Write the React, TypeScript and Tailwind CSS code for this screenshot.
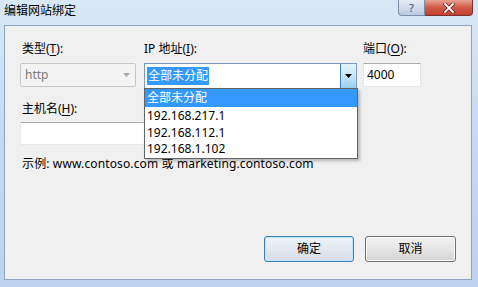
import React from "react";

const font = { fontFamily: '"Noto Sans", "Noto Sans CJK SC", sans-serif' };

function U({ c }: { c: string }) {
  return <span className="underline underline-offset-2">{c}</span>;
}

export default function App() {
  return (
    <div
      className="w-[478px] h-[287px] flex flex-col overflow-hidden bg-gradient-to-b from-[#d9e8f7] via-[#c4d9ef] to-[#bcd3ec] text-[12px] text-black"
      style={font}
    >
      {/* title bar */}
      <div className="h-[25px] flex items-start shrink-0">
        <div className="pl-[4px] pt-[3px] leading-[16px] text-[12px] text-black">编辑网站绑定</div>
        <div className="ml-auto mr-[5px] flex">
          <div className="w-[27px] h-[16px] rounded-bl-[4px] border border-[#7a8ea8] border-t-0 bg-gradient-to-b from-[#e4edf7] to-[#b9cbe0] flex items-center justify-center text-[11px] leading-none text-[#3b4d63]">
            ?
          </div>
          <div className="w-[48px] h-[16px] rounded-br-[4px] border border-[#7a3230] border-t-0 border-l-0 bg-gradient-to-b from-[#e8a194] via-[#cf5a48] to-[#c2402f] flex items-center justify-center">
            <svg width="12" height="10" viewBox="0 0 12 10">
              <path d="M2 1 L10 9 M10 1 L2 9" stroke="#5a1f18" strokeWidth="3.2" strokeLinecap="square" />
              <path d="M2 1 L10 9 M10 1 L2 9" stroke="#ffffff" strokeWidth="1.8" strokeLinecap="square" />
            </svg>
          </div>
        </div>
      </div>

      {/* client area */}
      <div className="ml-[4px] mr-[6px] h-[255px] border border-[#8ea6c2] bg-[#f0f0f0] relative flex flex-col pl-[15px] pt-[15px]">
        {/* row 1 */}
        <div className="flex">
          <div className="w-[116px] flex flex-col">
            <div className="pl-[2px] leading-[16px]">
              类型(<U c="T" />):
            </div>
            <div className="mt-[6px] h-[24px] border border-[#c5c9cc] bg-[#f4f4f4] rounded-[2px] flex items-center pl-[4px] text-[#7b7b7b]">
              <span className="flex-1">http</span>
              <svg width="7" height="4" viewBox="0 0 7 4" className="mr-[5px]">
                <path d="M0 0 L7 0 L3.5 4 Z" fill="#a8a8a8" />
              </svg>
            </div>
          </div>
          <div className="w-[213px] ml-[8px] flex flex-col">
            <div className="leading-[16px]">
              IP 地址(<U c="I" />):
            </div>
            <div className="mt-[6px] h-[26px] border border-[#7d9ab8] bg-white flex items-center pl-[2px]">
              <span className="flex-1 flex">
                <span className="bg-[#3399ff] text-white px-[1px] leading-[18px]">全部未分配</span>
              </span>
              <div className="w-[16px] h-full border-l border-[#3c7fb1] bg-gradient-to-b from-[#e5f4fc] via-[#c4e5f6] to-[#98d1ef] flex items-center justify-center">
                <svg width="7" height="4" viewBox="0 0 7 4">
                  <path d="M0 0 L7 0 L3.5 4 Z" fill="#000" />
                </svg>
              </div>
            </div>
          </div>
          <div className="w-[58px] ml-[6px] flex flex-col">
            <div className="leading-[16px]">
              端口(<U c="O" />):
            </div>
            <div className="mt-[6px] h-[24px] border border-[#e3e9ef] border-t-[#abadb3] bg-white flex items-center pl-[3px]">
              4000
            </div>
          </div>
        </div>

        {/* row 2 */}
        <div className="mt-[12px] w-[337px] flex flex-col">
          <div className="pl-[2px] leading-[16px]">
            主机名(<U c="H" />):
          </div>
          <div className="mt-[5px] h-[23px] border border-[#e3e9ef] border-t-[#abadb3] bg-white"></div>
        </div>

        <div className="mt-[11px] pl-[2px] leading-[16px] tracking-[0.13px]">示例: www.contoso.com 或 marketing.contoso.com</div>

        {/* buttons */}
        <div className="mt-auto mb-[17px] flex justify-end pr-[15px] gap-[11px]">
          <button className="w-[90px] h-[26px] rounded-[3px] border border-[#3c7fb1] bg-gradient-to-b from-[#edf5fb] via-[#e2e9f0] to-[#d8dde8] shadow-[inset_0_0_0_1px_#bde6fd] text-[12px]">
            确定
          </button>
          <button className="w-[91px] h-[26px] rounded-[3px] border border-[#707070] bg-gradient-to-b from-[#f2f2f2] via-[#e6e6e6] to-[#d2d2d2] shadow-[inset_0_0_0_1px_#fcfcfc] text-[12px]">
            取消
          </button>
        </div>

        {/* dropdown list overlay */}
        <div className="absolute left-[139px] top-[62px] w-[214px] border border-[#646464] bg-white shadow-[2px_2px_3px_rgba(0,0,0,0.25)] flex flex-col">
          <div className="h-[18px] leading-[18px] pl-[2px] bg-[#3399ff] text-white">全部未分配</div>
          <div className="h-[17px] leading-[17px] pl-[2px]">192.168.217.1</div>
          <div className="h-[17px] leading-[17px] pl-[2px]">192.168.112.1</div>
          <div className="h-[17px] leading-[16px] pl-[2px]">192.168.1.102</div>
        </div>
      </div>
    </div>
  );
}
